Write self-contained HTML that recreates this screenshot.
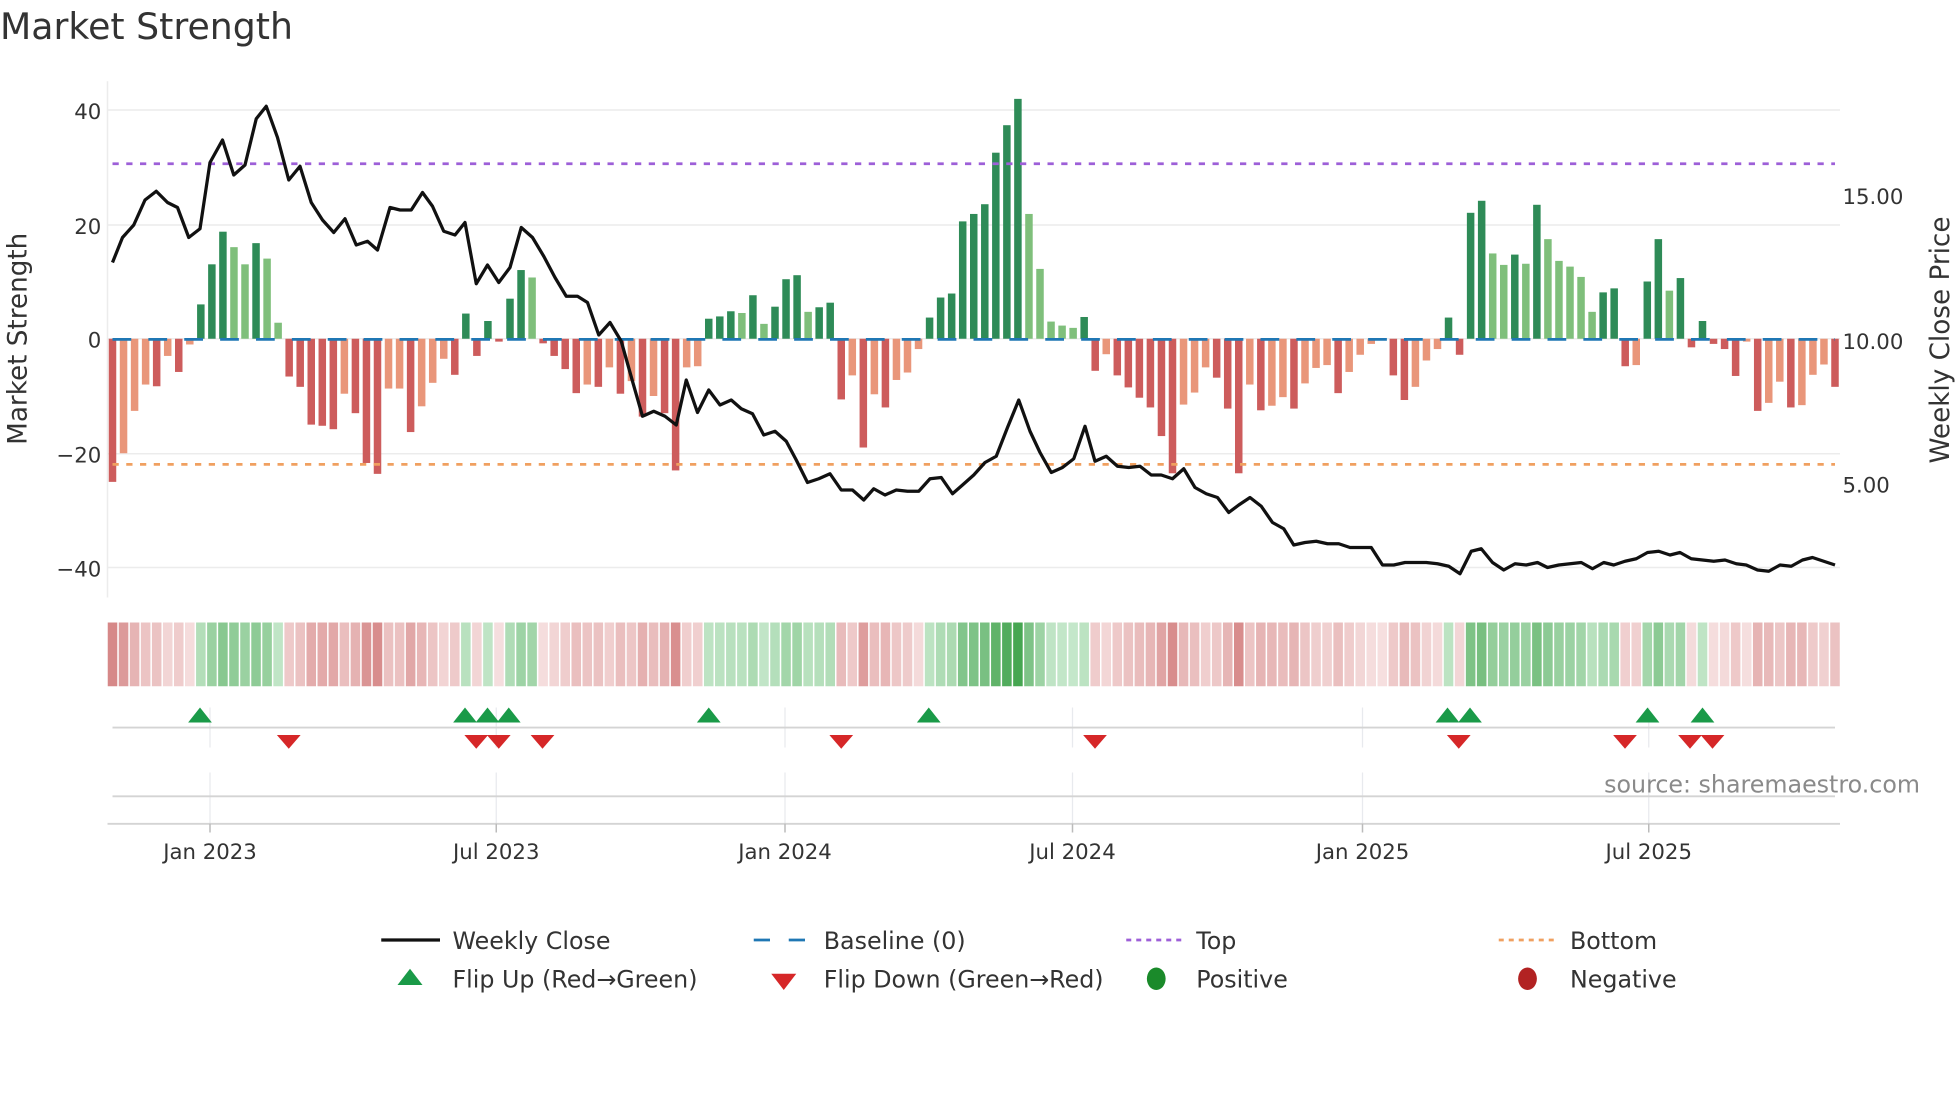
<!DOCTYPE html>
<html><head><meta charset="utf-8">
<style>
html,body{margin:0;padding:0;background:#fff;width:1960px;height:1102px;overflow:hidden}
svg{display:block}
text{font-family:"DejaVu Sans","Liberation Sans",sans-serif;fill:#333}
</style></head>
<body>
<svg id="s" width="1960" height="1102" viewBox="0 0 1568 881.6" xmlns="http://www.w3.org/2000/svg">
<text x="0" y="31" font-size="29">Market Strength</text>
<g stroke="#ececec" stroke-width="1.2">
<line x1="86" y1="88" x2="1472" y2="88"/><line x1="86" y1="180" x2="1472" y2="180"/>
<line x1="86" y1="271" x2="1472" y2="271"/><line x1="86" y1="363" x2="1472" y2="363"/>
<line x1="86" y1="454" x2="1472" y2="454"/>
<line x1="86" y1="65" x2="86" y2="478"/>
</g>
<g font-size="17" text-anchor="end">
<text x="81" y="95">40</text><text x="81" y="187">20</text><text x="81" y="278">0</text>
<text x="81" y="370">−20</text><text x="81" y="461">−40</text>
</g>
<g font-size="17">
<text x="1474" y="163">15.00</text><text x="1474" y="279">10.00</text><text x="1474" y="394">5.00</text>
</g>
<text transform="translate(21,271) rotate(-90)" font-size="21" text-anchor="middle">Market Strength</text>
<text transform="translate(1559,272) rotate(-90)" font-size="21" text-anchor="middle">Weekly Close Price</text>
<g id="bars"></g>
<line x1="90" y1="271.5" x2="1468" y2="271.5" stroke="#1f77b4" stroke-width="2.2" stroke-dasharray="15 13.7"/>
<line x1="90" y1="131" x2="1468" y2="131" stroke="#9d5fd8" stroke-width="2.2" stroke-dasharray="5 6"/>
<line x1="90" y1="371.5" x2="1468" y2="371.5" stroke="#f0a060" stroke-width="2.2" stroke-dasharray="5 6"/>
<polyline id="price" fill="none" stroke="#111" stroke-width="2.6" stroke-linejoin="round"/>
<g id="strip"></g>
<g stroke="#e8eaee" stroke-width="1">
<line x1="168" y1="566" x2="168" y2="598"/><line x1="397" y1="566" x2="397" y2="598"/><line x1="628" y1="566" x2="628" y2="598"/><line x1="858" y1="566" x2="858" y2="598"/><line x1="1090" y1="566" x2="1090" y2="598"/><line x1="1319" y1="566" x2="1319" y2="598"/>
<line x1="168" y1="618" x2="168" y2="659"/><line x1="397" y1="618" x2="397" y2="659"/><line x1="628" y1="618" x2="628" y2="659"/><line x1="858" y1="618" x2="858" y2="659"/><line x1="1090" y1="618" x2="1090" y2="659"/><line x1="1319" y1="618" x2="1319" y2="659"/>
</g>
<line x1="90" y1="582" x2="1468" y2="582" stroke="#d4d4d4" stroke-width="1.5"/>
<line x1="90" y1="637" x2="1468" y2="637" stroke="#d4d4d4" stroke-width="1.5"/>
<line x1="86" y1="659" x2="1472" y2="659" stroke="#d4d4d4" stroke-width="1.5"/>
<g stroke="#bbb" stroke-width="1.2">
<line x1="168" y1="659" x2="168" y2="666"/><line x1="397" y1="659" x2="397" y2="666"/><line x1="628" y1="659" x2="628" y2="666"/><line x1="858" y1="659" x2="858" y2="666"/><line x1="1090" y1="659" x2="1090" y2="666"/><line x1="1319" y1="659" x2="1319" y2="666"/>
</g>
<g id="marks"></g>
<g font-size="17" text-anchor="middle">
<text x="168" y="687">Jan 2023</text><text x="397" y="687">Jul 2023</text><text x="628" y="687">Jan 2024</text>
<text x="858" y="687">Jul 2024</text><text x="1090" y="687">Jan 2025</text><text x="1319" y="687">Jul 2025</text>
</g>
<text x="1536" y="634" font-size="19" text-anchor="end" style="fill:#8a8a8a">source: sharemaestro.com</text>
<g font-size="19">
<line x1="305" y1="752" x2="352" y2="752" stroke="#111" stroke-width="2.6"/>
<text x="362" y="759">Weekly Close</text>
<line x1="603" y1="752" x2="647" y2="752" stroke="#1f77b4" stroke-width="2.2" stroke-dasharray="13 15"/>
<text x="659" y="759">Baseline (0)</text>
<line x1="901" y1="752" x2="946" y2="752" stroke="#9d5fd8" stroke-width="2.2" stroke-dasharray="4 4"/>
<text x="957" y="759">Top</text>
<line x1="1199" y1="752" x2="1244" y2="752" stroke="#f0a060" stroke-width="2.2" stroke-dasharray="4 4"/>
<text x="1256" y="759">Bottom</text>
<polygon points="318,788 338,788 328,775" fill="#1a9a48"/>
<text x="362" y="790">Flip Up (Red→Green)</text>
<polygon points="617,779 637,779 627,792" fill="#d62728"/>
<text x="659" y="790">Flip Down (Green→Red)</text>
<ellipse cx="925" cy="783" rx="7.5" ry="9" fill="#1a8a2a"/>
<text x="957" y="790">Positive</text>
<ellipse cx="1222" cy="783" rx="7.5" ry="9" fill="#b22222"/>
<text x="1256" y="790">Negative</text>
</g>
</svg>
<script>
var v=[-25,-20,-12.6,-8,-8.3,-3,-5.8,-1,6,13,18.7,16,13,16.7,14,2.8,-6.6,-8.4,-15,-15.2,-15.8,-9.6,-13,-21.7,-23.6,-8.7,-8.7,-16.3,-11.8,-7.7,-3.5,-6.3,4.4,-3,3.1,-0.5,7,12,10.7,-0.8,
-3,-5.3,-9.5,-8,-8.4,-5,-9.6,-7.4,-13.6,-10,-13,-23,-5,-4.8,3.5,3.9,4.8,4.5,7.6,2.6,5.6,10.4,11.1,4.7,5.5,6.3,-10.6,-6.4,-19,-9.7,-12,-7.2,-5.9,-1.8,3.7,7.2,7.9,20.5,21.8,23.5,
32.5,37.3,41.9,21.8,12.2,3,2.3,1.9,3.8,-5.6,-2.7,-6.4,-8.5,-10.3,-12,-17,-23.5,-11.5,-9.4,-5,-6.8,-12.2,-23.5,-8,-12.5,-11.7,-10.2,-12.2,-7.8,-5.1,-4.6,-9.5,-5.8,-2.8,-0.9,-0.2,-6.4,-10.7,-8.4,-3.8,
-1.8,3.7,-2.8,22,24.1,14.9,12.9,14.7,13.1,23.4,17.4,13.6,12.6,10.8,4.7,8.1,8.8,-4.8,-4.6,10,17.4,8.4,10.6,-1.5,3.1,-0.9,-1.8,-6.5,-0.5,-12.6,-11.2,-7.5,-12,-11.6,-6.3,-4.5,-8.4];
var NS="http://www.w3.org/2000/svg",n=v.length,dx=(1468-90)/(n-1);
function el(t,a,p){var e=document.createElementNS(NS,t);for(var k in a)e.setAttribute(k,a[k]);p.appendChild(e);return e;}
function mix(a,b,t){var r=[0,1,2].map(function(i){return Math.round(a[i]+(b[i]-a[i])*t)});return "rgb("+r.join(",")+")";}
var B=document.getElementById("bars"),S=document.getElementById("strip");
for(var i=0;i<n;i++){var x=90+i*dx,val=v[i],p=i?v[i-1]:0;
 var dark=(i==0)||(val*p<0)||(Math.abs(val)>Math.abs(p));
 var c=val>=0?(dark?"#2e8b57":"#7fbf7b"):(dark?"#cd5c5c":"#e9967a");
 var h=Math.abs(val)*4.58,y=val>=0?271-h:271;
 el("rect",{x:x-3,y:y,width:6,height:Math.max(h,1),fill:c},B);
 var t,col;
 if(val>=0){t=Math.min(val/42,1);col=mix([208,237,213],[70,166,81],Math.pow(t,0.8));}
 else{t=Math.min(-val/25,1);col=mix([246,224,224],[214,136,136],t);}
 el("rect",{x:x-4.41+0.6,y:498,width:dx-1.2,height:51,fill:col},S);
}
var pts=[[90,210],[98,190],[107,180],[116,160],[125,153],[134,162],[142,166],[151,190],[160,183],[168,130],[178,112],[187,140],[196,132],[205,95],[213,85],[222,110],[231,144],[240,133],[249,162],[258,176],[267,186],[276,175],[285,196],[294,193],[302,200],[312,166],[320,168],[329,168],[338,154],[346,165],[355,185],[364,188],[372,178],[381,227],[390,212],[399,226],[408,214],[417,182],[426,190],[435,205],[444,222],[453,237],[462,237],[470,242],[479,268],[488,258],[497,273],[506,305],[514,333],[523,329],[532,333],[541,340],[549,304],[558,330],[567,312],[576,324],[585,320],[593,327],[602,331],[611,348],[620,345],[629,353],[637,368],[646,386],[655,383],[664,379],[673,392],[682,392],[691,400],[699,391],[708,396],[717,392],[726,393],[735,393],[744,383],[753,382],[762,395],[770,388],[779,380],[788,370],[797,365],[806,342],[815,320],[824,345],[832,362],[841,378],[850,374],[859,367],[868,341],[876,369],[885,365],[894,373],[903,374],[912,373],[921,380],[929,380],[938,383],[947,375],[956,390],[965,395],[974,398],[983,410],[991,404],[1000,398],[1009,405],[1018,418],[1027,423],[1035,436],[1044,434],[1053,433],[1062,435],[1071,435],[1080,438],[1088,438],[1097,438],[1106,452],[1115,452],[1124,450],[1133,450],[1141,450],[1150,451],[1159,453],[1168,459],[1177,441],[1185,439],[1194,450],[1203,456],[1212,451],[1221,452],[1230,450],[1238,454],[1247,452],[1256,451],[1265,450],[1274,455],[1283,450],[1291,452],[1300,449],[1309,447],[1318,442],[1327,441],[1336,444],[1344,442],[1353,447],[1362,448],[1371,449],[1380,448],[1389,451],[1397,452],[1406,456],[1415,457],[1424,452],[1433,453],[1442,448],[1450,446],[1459,449],[1468,452]];
document.getElementById("price").setAttribute("points",pts.map(function(p){return p.join(",")}).join(" "));
var M=document.getElementById("marks");
[160,372,390,407,567,743,1158,1176,1318,1362].forEach(function(x){el("polygon",{points:(x-9.5)+",578 "+(x+9.5)+",578 "+x+",566",fill:"#1a9a48"},M);});
[231,381,399,434,673,876,1167,1300,1352,1370].forEach(function(x){el("polygon",{points:(x-9.5)+",588 "+(x+9.5)+",588 "+x+",599",fill:"#d62728"},M);});
</script>
</body></html>
